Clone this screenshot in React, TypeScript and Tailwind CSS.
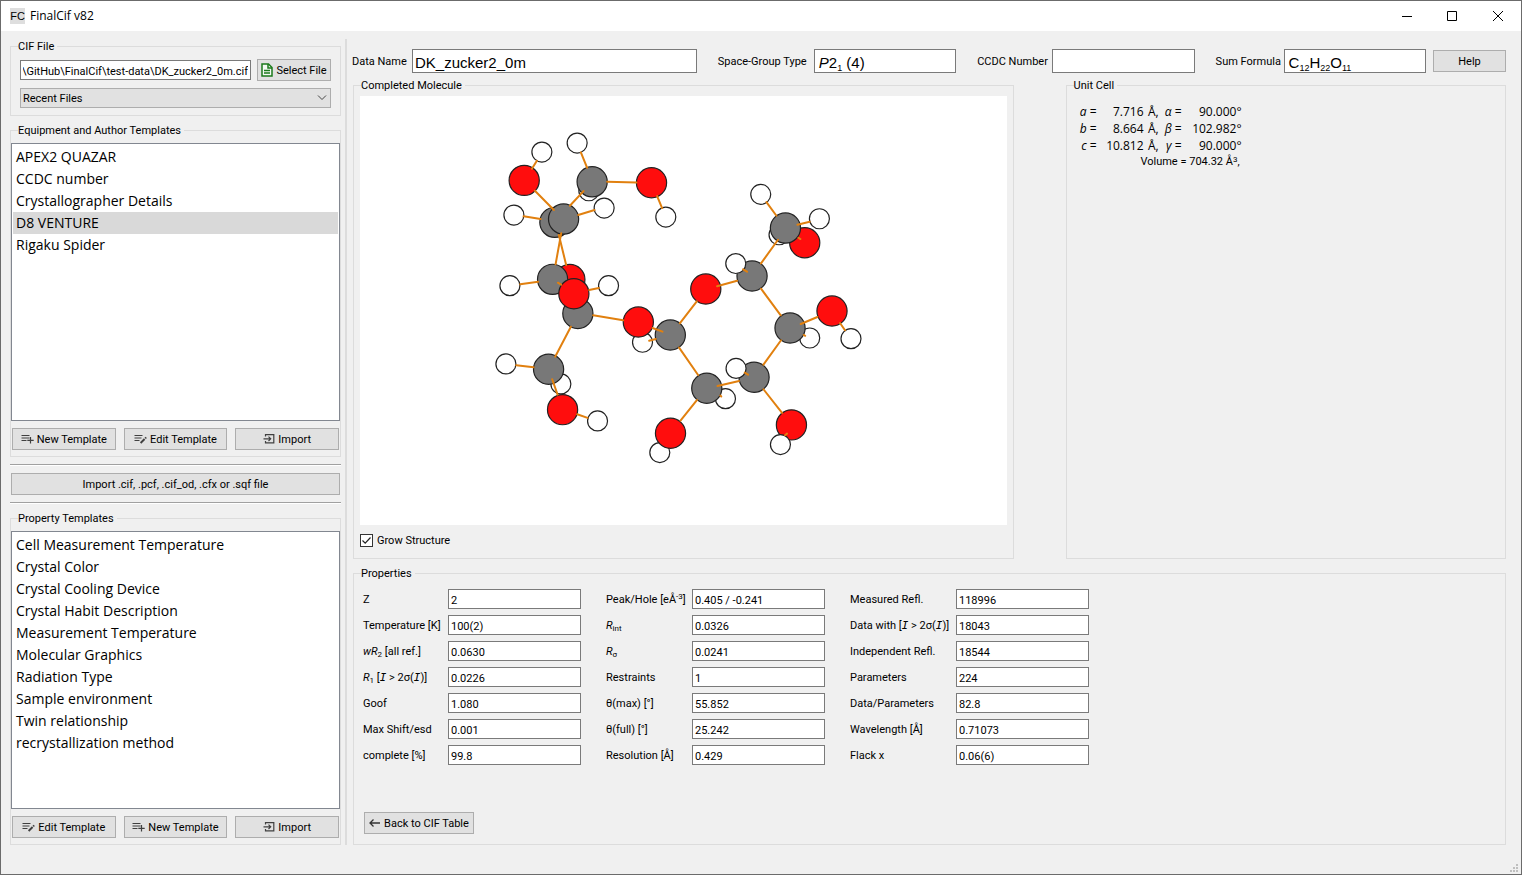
import { useEffect, useRef } from "react";
import type { ReactNode } from "react";

type Atom = ["C" | "O" | "H", number, number];

const atoms: Atom[] = [
  ["H", 542, 152], ["O", 524.3, 180.3], ["H", 577.3, 143], ["H", 589, 190.7],
  ["C", 592.3, 181.7], ["O", 651.7, 182.7], ["H", 666, 217], ["H", 604.3, 208],
  ["H", 514, 215], ["C", 555, 222.3], ["C", 563.7, 219], ["H", 510, 285.7],
  ["O", 570, 279.5], ["C", 552.7, 279.3], ["H", 608.7, 285.7], ["C", 578, 313.5],
  ["O", 574, 293.7], ["H", 642.7, 342.3], ["O", 638.5, 322], ["C", 670.5, 335],
  ["H", 506, 364], ["H", 561, 384], ["C", 548.7, 369.3], ["O", 562.7, 409.7],
  ["H", 597.7, 421], ["H", 660, 452.7], ["O", 670.7, 433.3], ["H", 761, 194.3],
  ["H", 779.3, 234.7], ["O", 805, 242.7], ["C", 785.7, 228], ["H", 819.7, 218.7],
  ["C", 752.3, 276], ["H", 736, 263.5], ["O", 706, 289], ["H", 810, 338],
  ["C", 790.3, 328], ["O", 832.3, 311], ["H", 851.3, 338.7], ["C", 754.3, 377.3],
  ["H", 736.3, 368.5], ["H", 725.7, 398.7], ["C", 707, 388.3], ["O", 791.7, 425],
  ["H", 780.7, 444.7],
];

const bonds: [number, number, number, number][] = [
  [537, 160.7, 532, 168.7], [581, 152.3, 587.3, 167.7], [607.3, 181.7, 636.7, 182.3],
  [657.3, 196, 662.3, 208], [535, 190.7, 554, 210], [583.7, 191, 570, 205.7],
  [578.3, 215, 594.7, 210], [523.7, 216.3, 540.7, 219], [561.3, 233.3, 555.7, 264.3],
  [559, 235, 566.3, 265], [520.3, 284.3, 538.3, 281.7], [558, 282.7, 561.3, 284.7],
  [589.3, 290, 599, 288], [593.3, 315.3, 623.3, 320.3], [571, 326.7, 555.3, 356.7],
  [652.7, 328, 662.7, 331.7], [649.3, 340.7, 656, 339], [516.3, 365.3, 533.7, 367.3],
  [552.3, 379.3, 557.7, 394.7], [577.3, 414.3, 587.7, 418], [766.7, 202, 776.7, 215.7],
  [797.7, 224.7, 810, 221.7], [778.3, 239.7, 761.3, 263.3], [798.7, 237.7, 800.7, 239],
  [743.3, 269.3, 747.3, 271.7], [717.3, 286.3, 737.3, 280.7], [680, 323.3, 697, 301.3],
  [761.3, 288.7, 781, 315.3], [801, 324, 817.7, 317], [840.3, 323, 845.3, 330.3],
  [804, 335, 805.5, 335.8], [781.3, 340.3, 763.7, 364.7], [745, 372.7, 748.3, 374.7],
  [717.7, 386, 739.3, 381], [679.3, 347.7, 698.3, 375], [697.3, 400, 680.7, 420.7],
  [763.7, 389.3, 782.3, 413], [785.3, 435.3, 787.3, 433.7], [720.5, 395.5, 721.5, 396.5],
];

const fill = { C: "#787878", O: "#ff0d0d", H: "#ffffff" };

function Molecule() {
  return (
    <svg viewBox="360 96 647 429" className="h-full w-full" role="img" aria-label="Molecule">
      {atoms.map(([el, x, y], i) => (
        <circle key={i} cx={x} cy={y} r={el === "H" ? 10 : 15.1} fill={fill[el]} stroke="#222222" strokeWidth="1.2" />
      ))}
      {bonds.map(([x1, y1, x2, y2], i) => (
        <line key={i} x1={x1} y1={y1} x2={x2} y2={y2} stroke="#e1800f" strokeWidth="2" strokeLinecap="round" />
      ))}
    </svg>
  );
}

function AddIcon() {
  return (
    <svg width="13" height="10" viewBox="0 0 13 10" fill="none" stroke="#404040" strokeWidth="1.2" aria-hidden="true">
      <path d="M0.5 1.5h8M0.5 4h8M0.5 6.5h5M9.5 3v6.5M6.3 6.3h6.4" />
    </svg>
  );
}

function EditIcon() {
  return (
    <svg width="13" height="10" viewBox="0 0 13 10" fill="none" stroke="#404040" strokeWidth="1.2" aria-hidden="true">
      <path d="M0.5 1.5h8M0.5 4h7M0.5 6.5h5" />
      <path d="M6.6 9l4-4M11.2 4.4l1-1" strokeWidth="1.9" />
    </svg>
  );
}

function ImportIcon() {
  return (
    <svg width="12" height="12" viewBox="0 0 12 12" fill="none" stroke="#404040" strokeWidth="1.2" aria-hidden="true">
      <path d="M2.5 3.5V1.6h8.3v8.3H2.5V8M0.5 5.8h7M5.5 3.6l2.2 2.2l-2.2 2.2" />
    </svg>
  );
}

function FileIcon() {
  return (
    <svg width="12" height="14" viewBox="0 0 12 14" fill="none" stroke="#1b7a1b" strokeWidth="1.5" aria-hidden="true">
      <path d="M1 1h6.5l3.5 3.5V13H1z" fill="#f4faf4" />
      <path d="M7 1v4h4" />
      <path d="M3 7.5h6M3 10h6" />
    </svg>
  );
}

function BackIcon() {
  return (
    <svg width="12" height="10" fill="none" stroke="#333333" strokeWidth="1.3" aria-hidden="true">
      <path d="M1 5h10M4.5 1.5l-3.5 3.5l3.5 3.5" />
    </svg>
  );
}

function Group({ title, className, children }: { title: string; className: string; children: ReactNode }) {
  return (
    <fieldset className={`min-w-0 border border-[#dcdcdc] ${className}`}>
      <legend className="pt-[2px] pr-[3px] leading-[12px]">{title}</legend>
      {children}
    </fieldset>
  );
}

function Button({ className = "", icon, children }: { className?: string; icon?: ReactNode; children: ReactNode }) {
  return (
    <button type="button" className={`flex h-[22px] items-center justify-center gap-[3px] whitespace-nowrap border border-[#adadad] bg-[#e1e1e1] ${className}`}>
      {icon}
      <span className="pt-[2px]">{children}</span>
    </button>
  );
}

function TemplateList({ label, items, selected }: { label: string; items: string[]; selected?: string }) {
  return (
    <ul role="listbox" aria-label={label} className="min-h-0 flex-1 overflow-hidden border border-[#828790] bg-white p-px pt-[2px] font-['Open_Sans',sans-serif] text-[14px] leading-[22px]">
      {items.map((item) => (
        <li key={item} role="option" aria-selected={item === selected} className={`px-[3px] ${item === selected ? "bg-[#d9d9d9]" : ""}`}>
          {item}
        </li>
      ))}
    </ul>
  );
}

function Divider() {
  return <hr className="h-[2px] w-full border-t border-b border-t-[#a0a0a0] border-b-white" />;
}

const I = () => <i className="font-['DejaVu_Sans_Mono']">I</i>;
const sub = "align-[-2px] text-[8px] leading-none";

const properties: { cols: string; rows: [string, ReactNode, string][] }[] = [
  {
    cols: "grid-cols-[85px_133px]",
    rows: [
      ["z", "Z", "2"],
      ["temp", "Temperature [K]", "100(2)"],
      ["wr2", <><i>wR</i><span className={sub}>2</span> [all ref.]</>, "0.0630"],
      ["r1", <><i>R</i><span className={sub}>1</span> [<I /> &gt; 2σ(<I />)]</>, "0.0226"],
      ["goof", "Goof", "1.080"],
      ["shift", "Max Shift/esd", "0.001"],
      ["complete", "complete [%]", "99.8"],
    ],
  },
  {
    cols: "grid-cols-[86px_133px]",
    rows: [
      ["peak", <>Peak/Hole [eÅ<span className="align-[4px] text-[8px] leading-none">-3</span>]</>, "0.405 / -0.241"],
      ["rint", <><i>R</i><span className={sub}>int</span></>, "0.0326"],
      ["rsigma", <><i>R</i><span className={sub}>σ</span></>, "0.0241"],
      ["restraints", "Restraints", "1"],
      ["tmax", "θ(max) [°]", "55.852"],
      ["tfull", "θ(full) [°]", "25.242"],
      ["resolution", "Resolution [Å]", "0.429"],
    ],
  },
  {
    cols: "grid-cols-[106px_133px]",
    rows: [
      ["measured", "Measured Refl.", "118996"],
      ["data", <>Data with [<I /> &gt; 2σ(<I />)]</>, "18043"],
      ["independent", "Independent Refl.", "18544"],
      ["parameters", "Parameters", "224"],
      ["ratio", "Data/Parameters", "82.8"],
      ["wavelength", "Wavelength [Å]", "0.71073"],
      ["flack", "Flack x", "0.06(6)"],
    ],
  },
];

const cell = [
  ["a", "7.716", "α", "90.000°"],
  ["b", "8.664", "β", "102.982°"],
  ["c", "10.812", "γ", "90.000°"],
];

const field = "w-full min-w-0 border border-[#7a7a7a] bg-white pt-[2px]";
const big = "h-6 font-['Liberation_Sans',sans-serif] text-[15px] leading-[22px]";
const bigSub = "align-[-3px] text-[9px] leading-none";

export default function App() {
  const path = useRef<HTMLInputElement>(null);
  useEffect(() => {
    if (path.current) path.current.scrollLeft = path.current.scrollWidth;
  }, []);

  return (
    <div className="flex h-screen min-h-[720px] flex-col border border-[#6b6b6b] bg-[#f0f0f0] font-['Roboto',sans-serif] text-[11px] leading-[14px] text-black">
      <header className="flex h-[30px] shrink-0 items-center bg-white pl-[9px]">
        <span className="flex h-4 w-[15px] items-center justify-center bg-[#dedede] font-['Liberation_Sans',sans-serif] text-[11px]">FC</span>
        <h1 className="ml-[5px] flex-1 font-['Open_Sans',sans-serif] text-[12px]">FinalCif v82</h1>
        <div className="flex">
          <button type="button" aria-label="Minimize" className="flex h-[29px] w-[45px] items-center justify-center">
            <svg width="10" height="10" stroke="black" aria-hidden="true"><path d="M0 5.5h10" /></svg>
          </button>
          <button type="button" aria-label="Maximize" className="flex h-[29px] w-[46px] items-center justify-center">
            <svg width="10" height="10" fill="none" stroke="black" aria-hidden="true"><path d="M.5 .5h9v9h-9z" /></svg>
          </button>
          <button type="button" aria-label="Close" className="flex h-[29px] w-[46px] items-center justify-center">
            <svg width="10" height="10" stroke="black" aria-hidden="true"><path d="M0 0L10 10M10 0L0 10" /></svg>
          </button>
        </div>
      </header>

      <div className="flex min-h-0 flex-1 pt-2 pl-[9px] pr-[15px]">
        <aside className="flex w-[331px] shrink-0 flex-col">
          <Group title="CIF File" className="flex flex-col gap-[7px] px-[9px] pt-[6px] pb-[7px] *:[legend]:-ml-[2px]">
            <div className="flex items-center justify-between">
              <input ref={path} aria-label="CIF file path" readOnly defaultValue="D:\GitHub\FinalCif\test-data\DK_zucker2_0m.cif" className="h-5 w-[231px] border border-[#7a7a7a] bg-white px-[2px] pt-[2px]" />
              <Button className="w-[74px]" icon={<FileIcon />}>Select File</Button>
            </div>
            <div className="relative">
              <select aria-label="Recent files" className="block h-5 w-full appearance-none border border-[#adadad] bg-[#e1e1e1] px-[2px] pt-[2px]">
                <option>Recent Files</option>
              </select>
              <svg width="10" height="6" fill="none" stroke="#444444" className="pointer-events-none absolute top-[7px] right-[4px]" aria-hidden="true"><path d="M1 .5l4 4l4-4" /></svg>
            </div>
          </Group>

          <Group title="Equipment and Author Templates" className="mt-[7px] flex min-h-0 flex-1 flex-col pb-[6px] *:[legend]:ml-[7px]">
            <div className="flex h-full flex-col pt-[6px]">
              <TemplateList label="Equipment and author templates" selected="D8 VENTURE" items={["APEX2 QUAZAR", "CCDC number", "Crystallographer Details", "D8 VENTURE", "Rigaku Spider"]} />
              <div className="mt-[7px] grid grid-cols-3 gap-2 px-px">
                <Button icon={<AddIcon />}>New Template</Button>
                <Button icon={<EditIcon />}>Edit Template</Button>
                <Button icon={<ImportIcon />}>Import</Button>
              </div>
            </div>
          </Group>

          <div className="flex flex-col gap-[7px] py-[7px]">
            <Divider />
            <Button className="mx-px">Import .cif, .pcf, .cif_od, .cfx or .sqf file</Button>
            <Divider />
          </div>

          <Group title="Property Templates" className="flex min-h-0 flex-1 flex-col pb-[6px] *:[legend]:ml-[7px]">
            <div className="flex h-full flex-col pt-[6px]">
              <TemplateList label="Property templates" items={["Cell Measurement Temperature", "Crystal Color", "Crystal Cooling Device", "Crystal Habit Description", "Measurement Temperature", "Molecular Graphics", "Radiation Type", "Sample environment", "Twin relationship", "recrystallization method"]} />
              <div className="mt-[7px] grid grid-cols-3 gap-2 px-px">
                <Button icon={<EditIcon />}>Edit Template</Button>
                <Button icon={<AddIcon />}>New Template</Button>
                <Button icon={<ImportIcon />}>Import</Button>
              </div>
            </div>
          </Group>
        </aside>

        <div className="mx-1 mr-[5px] w-[2px] shrink-0 bg-[#dcdcdc]" />

        <main className="flex min-w-0 flex-1 flex-col">
          <div className="grid grid-cols-[60px_2fr_117px_1fr_96px_1fr_89px_1fr_80px] items-center whitespace-nowrap pt-[10px] pb-[5px]">
            <label htmlFor="dataName" className="pt-[2px]">Data Name</label>
            <input id="dataName" defaultValue="DK_zucker2_0m" className={`${field} ${big} px-[2px]`} />
            <span id="spaceGroup" className="pt-[2px] pl-[21px]">Space-Group Type</span>
            <div role="textbox" tabIndex={0} aria-labelledby="spaceGroup" className={`${field} ${big} px-1`}>
              <i>P</i>2<span className={bigSub}>1</span> (4)
            </div>
            <label htmlFor="ccdc" className="pt-[2px] pl-[21px]">CCDC Number</label>
            <input id="ccdc" className={`${field} ${big} px-[2px]`} />
            <span id="sumFormula" className="pt-[2px] pl-[21px]">Sum Formula</span>
            <div role="textbox" tabIndex={0} aria-labelledby="sumFormula" className={`${field} ${big} px-1`}>
              {[["C", "12"], ["H", "22"], ["O", "11"]].map(([el, n]) => (
                <span key={el}>{el}<span className={bigSub}>{n}</span></span>
              ))}
            </div>
            <Button className="ml-[7px]">Help</Button>
          </div>

          <div className="grid min-h-0 flex-1 grid-cols-[3fr_2fr] grid-rows-[minmax(0,1fr)] gap-[52px] pl-px">
            <Group title="Completed Molecule" className="flex flex-col px-[6px] pb-[11px] *:[legend]:ml-px">
              <div className="flex h-full flex-col pt-[4px]">
                <div className="min-h-0 flex-1 bg-white"><Molecule /></div>
                <label className="mt-2 flex items-center gap-1">
                  <span className="relative flex">
                    <input type="checkbox" defaultChecked className="peer h-[13px] w-[13px] appearance-none border border-[#333333] bg-white" />
                    <svg width="13" height="13" fill="none" stroke="#222222" strokeWidth="1.2" className="pointer-events-none absolute inset-0 hidden peer-checked:block" aria-hidden="true"><path d="M2.5 6.5l2.7 2.7l5.3-5.7" /></svg>
                  </span>
                  <span className="pt-[2px] leading-[12px]">Grow Structure</span>
                </label>
              </div>
            </Group>

            <Group title="Unit Cell" className="px-[12px] *:[legend]:-ml-[5px]">
              <div className="mt-[11px] w-[163px]">
                <table className="w-full text-right font-['Open_Sans',sans-serif] text-[12px] leading-[17px]">
                  <tbody>
                    {cell.map(([len, value, ang, deg]) => (
                      <tr key={len}>
                        <td className="w-[18px] whitespace-nowrap p-0"><i>{len}</i> =</td>
                        <td className="p-0">{value}</td>
                        <td className="w-[15px] p-0">Å,</td>
                        <td className="w-[23px] whitespace-nowrap p-0"><i>{ang}</i> =</td>
                        <td className="w-[60px] p-0">{deg}</td>
                      </tr>
                    ))}
                  </tbody>
                </table>
                <p className="pt-px pr-[2px] text-right">Volume = 704.32 Å<span className="align-[3px] text-[8px] leading-none">3</span>,</p>
              </div>
            </Group>
          </div>

          <div className="mt-[7px] flex pl-px">
            <Group title="Properties" className="flex-1 px-[9px] pb-[10px] *:[legend]:-ml-[2px]">
              <div className="mt-[9px] flex gap-[25px]">
                {properties.map(({ cols, rows }) => (
                  <div key={cols} className={`grid ${cols} gap-y-[6px]`}>
                    {rows.map(([id, label, value]) => (
                      <div key={id} className="col-span-2 grid grid-cols-subgrid items-center">
                        <label htmlFor={id} className="pt-[2px] whitespace-nowrap">{label}</label>
                        <input id={id} defaultValue={value} className={`${field} h-5 px-[2px]`} />
                      </div>
                    ))}
                  </div>
                ))}
              </div>
              <Button className="mt-[47px] ml-px w-[110px]" icon={<BackIcon />}>Back to CIF Table</Button>
            </Group>
          </div>
        </main>
      </div>

      <footer className="flex h-[29px] shrink-0 items-end justify-end pr-[3px] pb-[2px]">
        <svg width="8" height="8" fill="#bfbfbf" aria-hidden="true"><path d="M6 0h2v2h-2zM3 3h2v2h-2zM6 3h2v2h-2zM0 6h2v2h-2zM3 6h2v2h-2zM6 6h2v2h-2z" /></svg>
      </footer>
    </div>
  );
}
